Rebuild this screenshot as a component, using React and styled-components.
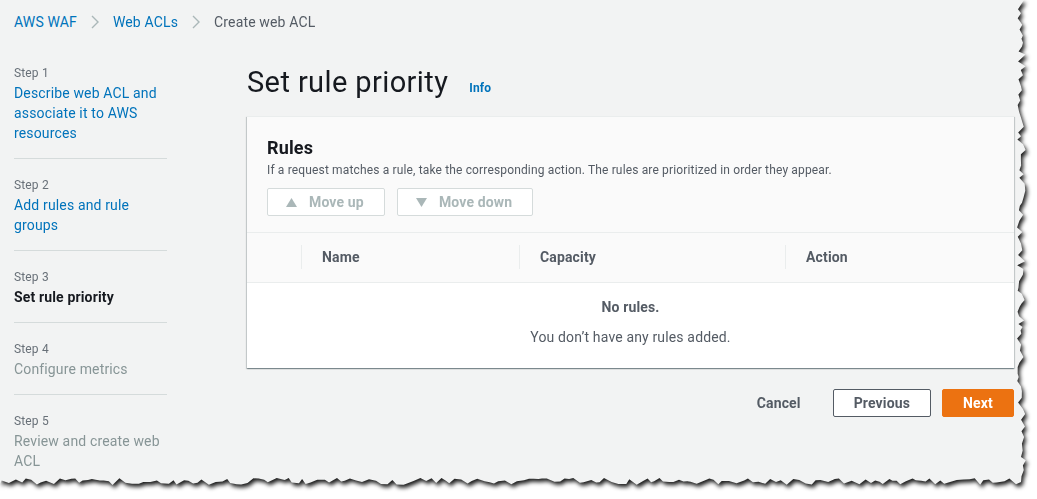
import styled, { createGlobalStyle } from 'styled-components';

const GlobalStyle = createGlobalStyle`
    html, body {
        margin: 0;
        padding: 0;
        background: #ffffff;
        font-family: Roboto, 'Liberation Sans', sans-serif;
        letter-spacing: 0.15px;
        -webkit-font-smoothing: antialiased;
    }
`;

// jagged torn-paper outline, seeded so it's the same every render
function tornEdge() {
    let seed = 7;
    const rand = () => {
        seed = (seed * 9301 + 49297) % 233280;
        return seed / 233280;
    };
    const pts = ['0px 0px', '1024px 0px'];
    for (let y = 4; y < 478; y += 3 + rand() * 4) {
        pts.push(`${(1017 + rand() * 9).toFixed(1)}px ${y.toFixed(1)}px`);
    }
    pts.push('1021px 482px');
    for (let x = 1016; x > 0; x -= 3 + rand() * 5) {
        pts.push(`${x.toFixed(1)}px ${(478 + rand() * 7).toFixed(1)}px`);
    }
    pts.push('0px 484px');
    return `polygon(${pts.join(', ')})`;
}

const TORN = tornEdge();

const Shadow = styled.div`
    width: 1037px;
    height: 499px;
    filter: drop-shadow(2px 3px 2px rgba(0, 0, 0, 0.9));
`;

const Paper = styled.div`
    box-sizing: border-box;
    width: 1032px;
    height: 492px;
    padding: 12px 18px 0 14px;
    background: #f2f3f3;
    clip-path: ${TORN};
`;

const Breadcrumbs = styled.nav`
    display: flex;
    align-items: center;
    gap: 14px;
    height: 20px;
    font-size: 14px;
    line-height: 20px;
`;

const Crumb = styled.span`
    color: ${(p) => (p.$current ? '#545b64' : '#0073bb')};
`;

const Chevron = () => (
    <svg width="8" height="14" viewBox="0 0 8 14">
        <polyline points="1,1 7,7 1,13" fill="none" stroke="#aab7b8" strokeWidth="1.4" />
    </svg>
);

const Layout = styled.div`
    display: grid;
    grid-template-columns: 153px 1fr;
    column-gap: 80px;
    margin-top: 15px;
`;

const Steps = styled.ol`
    list-style: none;
    margin: 0;
    padding: 0;
`;

const Step = styled.li`
    padding: 16px 0 15px;
    border-bottom: ${(p) => (p.$last ? 'none' : '1px solid #d5dbdb')};
`;

const StepLabel = styled.div`
    font-size: 12px;
    line-height: 20px;
    color: #687078;
`;

const StepTitle = styled.div`
    font-size: 14px;
    line-height: 20px;
    color: ${(p) => (p.$state === 'done' ? '#0073bb' : p.$state === 'current' ? '#16191f' : '#879596')};
    font-weight: ${(p) => (p.$state === 'current' ? 700 : 400)};
`;

const Main = styled.main`
    display: flex;
    flex-direction: column;
`;

const Header = styled.div`
    display: flex;
    align-items: baseline;
    gap: 21px;
    padding: 17px 0 16px;
`;

const Title = styled.h1`
    margin: 0;
    font-size: 29px;
    line-height: 36px;
    font-weight: 400;
    letter-spacing: 0.4px;
    color: #16191f;
`;

const InfoLink = styled.a`
    font-size: 12px;
    font-weight: 700;
    color: #0073bb;
`;

const Card = styled.section`
    background: #ffffff;
    border-top: 1px solid #eaeded;
    box-shadow: 0 1px 1px 0 rgba(0, 28, 36, 0.3), 1px 1px 1px 0 rgba(0, 28, 36, 0.15),
        -1px 1px 1px 0 rgba(0, 28, 36, 0.15);
`;

const CardHeader = styled.div`
    background: #fafafa;
    padding: 20px 20px 16px;
    border-bottom: 1px solid #eaeded;
`;

const CardTitle = styled.h2`
    margin: 0;
    font-size: 18px;
    line-height: 22px;
    font-weight: 700;
    color: #16191f;
`;

const CardDesc = styled.p`
    margin: 3px 0 0;
    font-size: 12px;
    line-height: 16px;
    color: #545b64;
`;

const Toolbar = styled.div`
    display: flex;
    gap: 12px;
    margin-top: 10px;
`;

const MoveButton = styled.button`
    display: flex;
    align-items: center;
    gap: 12px;
    height: 28px;
    padding: 0 20px 0 18px;
    border: 1px solid #d5dbdb;
    border-radius: 2px;
    background: #ffffff;
    color: #aab7b8;
    font-family: inherit;
    font-size: 14px;
    font-weight: 700;
    letter-spacing: inherit;
`;

const Triangle = ({ down }) => (
    <svg width="11" height="9" viewBox="0 0 11 9">
        <polygon points={down ? '0,0 11,0 5.5,9' : '0,9 11,9 5.5,0'} fill="#aab7b8" />
    </svg>
);

const HeadRow = styled.div`
    display: grid;
    grid-template-columns: 54px 218px 266px 1fr;
    height: 49px;
    background: #fafafa;
    border-bottom: 1px solid #eaeded;
`;

const HeadCell = styled.div`
    display: flex;
    align-items: center;
    position: relative;
    padding: 0 0 2px 21px;
    font-size: 14px;
    font-weight: 700;
    color: #545b64;

    &::before {
        content: '';
        display: ${(p) => (p.$first ? 'none' : 'block')};
        position: absolute;
        left: 0;
        top: 12px;
        height: 24px;
        border-left: 1px solid #eaeded;
    }
`;

const Empty = styled.div`
    display: flex;
    flex-direction: column;
    align-items: center;
    gap: 10px;
    padding: 14px 0 21px;
    font-size: 14px;
    line-height: 20px;
    color: #545b64;
`;

const EmptyTitle = styled.div`
    font-weight: 700;
`;

const Actions = styled.div`
    display: flex;
    justify-content: flex-end;
    align-items: center;
    gap: 11px;
    margin-top: 21px;
`;

const ActionButton = styled.button`
    height: 28px;
    padding: 0 20px;
    border-radius: 2px;
    font-family: inherit;
    font-size: 14px;
    font-weight: 700;
    letter-spacing: inherit;
    border: 1px solid
        ${(p) => (p.$variant === 'primary' ? '#ec7211' : p.$variant === 'normal' ? '#545b64' : 'transparent')};
    background: ${(p) => (p.$variant === 'primary' ? '#ec7211' : p.$variant === 'normal' ? '#ffffff' : 'transparent')};
    color: ${(p) => (p.$variant === 'primary' ? '#ffffff' : '#545b64')};
`;

const steps = [
    { title: 'Describe web ACL and associate it to AWS resources', state: 'done' },
    { title: 'Add rules and rule groups', state: 'done' },
    { title: 'Set rule priority', state: 'current' },
    { title: 'Configure metrics', state: 'todo' },
    { title: 'Review and create web ACL', state: 'todo' },
];

export default function App() {
    return (
        <>
            <GlobalStyle />
            <Shadow>
                <Paper>
                    <Breadcrumbs>
                        <Crumb>AWS WAF</Crumb>
                        <Chevron />
                        <Crumb>Web ACLs</Crumb>
                        <Chevron />
                        <Crumb $current>Create web ACL</Crumb>
                    </Breadcrumbs>
                    <Layout>
                        <Steps>
                            {steps.map((s, i) => (
                                <Step key={s.title} $last={i === steps.length - 1}>
                                    <StepLabel>Step {i + 1}</StepLabel>
                                    <StepTitle $state={s.state}>{s.title}</StepTitle>
                                </Step>
                            ))}
                        </Steps>
                        <Main>
                            <Header>
                                <Title>Set rule priority</Title>
                                <InfoLink>Info</InfoLink>
                            </Header>
                            <Card>
                                <CardHeader>
                                    <CardTitle>Rules</CardTitle>
                                    <CardDesc>
                                        If a request matches a rule, take the corresponding action. The rules are
                                        prioritized in order they appear.
                                    </CardDesc>
                                    <Toolbar>
                                        <MoveButton>
                                            <Triangle />
                                            Move up
                                        </MoveButton>
                                        <MoveButton>
                                            <Triangle down />
                                            Move down
                                        </MoveButton>
                                    </Toolbar>
                                </CardHeader>
                                <HeadRow>
                                    <HeadCell $first />
                                    <HeadCell>Name</HeadCell>
                                    <HeadCell>Capacity</HeadCell>
                                    <HeadCell>Action</HeadCell>
                                </HeadRow>
                                <Empty>
                                    <EmptyTitle>No rules.</EmptyTitle>
                                    <div>You don’t have any rules added.</div>
                                </Empty>
                            </Card>
                            <Actions>
                                <ActionButton>Cancel</ActionButton>
                                <ActionButton $variant="normal">Previous</ActionButton>
                                <ActionButton $variant="primary">Next</ActionButton>
                            </Actions>
                        </Main>
                    </Layout>
                </Paper>
            </Shadow>
        </>
    );
}
